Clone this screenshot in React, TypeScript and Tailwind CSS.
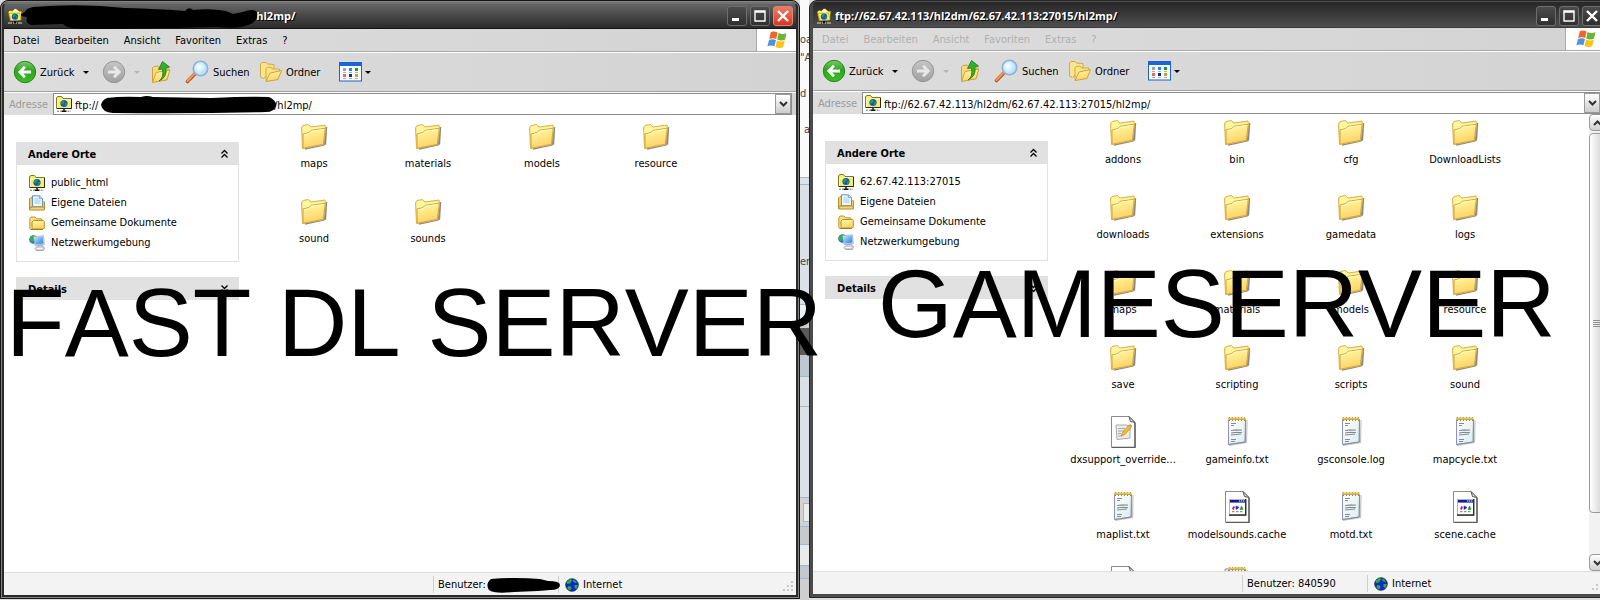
import React from "react";

type IconKind = "folder" | "page" | "note" | "notes" | "cache";

type FileEntry = {
  name: string;
  icon: IconKind;
};

const folders = (names: string[]): FileEntry[] => names.map((name) => ({ name, icon: "folder" }));

const fastDlFiles = folders(["maps", "materials", "models", "resource", "sound", "sounds"]);

const gameServerFiles: FileEntry[] = [
  ...folders(["addons", "bin", "cfg", "DownloadLists"]),
  ...folders(["downloads", "extensions", "gamedata", "logs"]),
  ...folders(["maps", "materials", "models", "resource"]),
  ...folders(["save", "scripting", "scripts", "sound"]),
  { name: "dxsupport_override...", icon: "page" },
  { name: "gameinfo.txt", icon: "note" },
  { name: "gsconsole.log", icon: "note" },
  { name: "mapcycle.txt", icon: "note" },
  { name: "maplist.txt", icon: "note" },
  { name: "modelsounds.cache", icon: "cache" },
  { name: "motd.txt", icon: "note" },
  { name: "scene.cache", icon: "cache" },
  { name: "", icon: "page" },
  { name: "", icon: "notes" },
];

const menuItems = ["Datei", "Bearbeiten", "Ansicht", "Favoriten", "Extras", "?"];

const Gradients = () => (
  <svg width="0" height="0" className="absolute" aria-hidden="true">
    <defs>
      <linearGradient id="folderFront" x1="0" y1="0" x2="0.3" y2="1">
        <stop offset="0" stopColor="#fffda6" />
        <stop offset="1" stopColor="#ffd267" />
      </linearGradient>
      <linearGradient id="greenBall" x1="0" y1="0" x2="0" y2="1">
        <stop offset="0" stopColor="#7ccb6a" />
        <stop offset="0.45" stopColor="#2fa41f" />
        <stop offset="1" stopColor="#3cc022" />
      </linearGradient>
      <linearGradient id="grayBall" x1="0" y1="0" x2="0" y2="1">
        <stop offset="0" stopColor="#c6c6c6" />
        <stop offset="1" stopColor="#a0a0a0" />
      </linearGradient>
      <radialGradient id="lens" cx="0.4" cy="0.4" r="0.6">
        <stop offset="0" stopColor="#ffffff" />
        <stop offset="1" stopColor="#a5dcfa" />
      </radialGradient>
      <linearGradient id="screen" x1="0" y1="0" x2="1" y2="1">
        <stop offset="0" stopColor="#a9e6ff" />
        <stop offset="1" stopColor="#2c7fd8" />
      </linearGradient>
      <linearGradient id="sheet" x1="0" y1="0" x2="1" y2="1">
        <stop offset="0" stopColor="#ffffff" />
        <stop offset="1" stopColor="#dcebee" />
      </linearGradient>
    </defs>
  </svg>
);

const FolderIcon = () => (
  <svg width="32" height="32" viewBox="0 0 32 32">
    <path d="M7 29 L26 25 L28.5 7 L27.5 24 L9 28.5z" fill="#777" stroke="#8a8a8a" strokeWidth="1.4" />
    <path d="M3.5 7.5 L5 5.5 L10.5 4.5 L13 7 L27 5 L27.5 9 L25.5 24.5 L4.5 28.5z" fill="#f6dc78" stroke="#d9b551" />
    <path d="M4.5 8 L5.5 6.2 L10.3 5.3 L12.8 7.8 L26.5 6.2 L26.5 8 L12.5 10.5 L10.5 12.5 L4.5 13.5z" fill="#fff7a0" />
    <path d="M5 14 L11 12.5 L13 10.3 L27.3 8.2 L25.3 24.3 L5.2 28.2z" fill="url(#folderFront)" stroke="#d8aa3a" />
    <path d="M6.2 15 L11.5 13.5 L13.5 11.3 L26 9.5" fill="none" stroke="#fffbd2" />
  </svg>
);

const PageOutline = () => (
  <>
    <path d="M4.5 0.5 H22 L28 6.5 V31.5 H4.5z" fill="#fff" stroke="#8b8b84" />
    <path d="M28 7 V31.5 H5" fill="none" stroke="#5c5c5c" strokeWidth="1.4" />
    <path d="M22 0.5 L28 6.5 L23.5 5.5z" fill="#e0e0e0" stroke="#555" />
  </>
);

const PageIcon = () => (
  <svg width="32" height="32" viewBox="0 0 32 32">
    <PageOutline />
    <path d="M9 9 H20 L23 12 V22 L10 23.5z" fill="#ececec" stroke="#aaa" />
    <path d="M11 12.5h7M11 15h6M11 17.5h3M11 20h4" stroke="#a9a9a9" />
    <path d="M14 20 L15.5 16.5 L21.5 9.5 L24 11.5 L18 18.5z" fill="#f5bd27" stroke="#b88211" strokeWidth="0.6" />
    <path d="M21.5 9.5 L23 8 L25.3 10 L24 11.5z" fill="#cf8f86" />
  </svg>
);

const CacheIcon = () => (
  <svg width="32" height="32" viewBox="0 0 32 32">
    <PageOutline />
    <rect x="8.5" y="8.5" width="16" height="15" fill="#fff" stroke="#b9b7a5" />
    <path d="M8 24.2 H24.8 V8" fill="none" stroke="#111" strokeWidth="1.2" />
    <rect x="9" y="9" width="15" height="2.6" fill="#0c1c9c" />
    <path d="M18 10h1.4M20 10h1.4M22 10h1.4" stroke="#fff" />
    <path d="M12.5 15 L14 16 L12.5 19 L11 18z" fill="#d4141c" />
    <path d="M15 15 V18.5 L18 16.5z" fill="#1620d8" stroke="#1620d8" strokeWidth="0.6" />
    <path d="M20.5 15 L22 18.5 H19z" fill="#129a22" stroke="#129a22" strokeWidth="0.6" />
    <path d="M11 20.7h2.5M15 20.7h2.5M19 20.7h2.5" stroke="#777" />
  </svg>
);

const NoteIcon = ({ stacked }: { stacked?: boolean }) => (
  <svg width="32" height="32" viewBox="0 0 32 32">
    {stacked && <path d="M4 3 L22 2 V10 L4 12z" fill="#dce9ec" stroke="#8f93c9" />}
    <path d="M8 29.5 L25.5 26.5 L26 4" fill="none" stroke="#c4c4c4" strokeWidth="1.2" />
    <path d="M7.5 3.5 H24.5 L24.2 26 L7.5 28.5z" fill="url(#sheet)" stroke="#8f90cc" />
    <path d="M24.5 3.5 L24.2 26 L7.5 28.5" fill="none" stroke="#849599" />
    <path d="M8.5 1 V5 M11.5 1 V5 M14.5 1 V5 M17.5 1 V5 M20.5 1 V5 M23.5 1 V5" stroke="#a88420" strokeWidth="1" />
    <path d="M7 2.5 H24.5" stroke="#e4c44c" strokeWidth="2" />
    <path d="M10 7.5h5M10 9.5h3M10 14.5l5-.6 6 .2M10 17l5-.6 6 .2M10 19l10-1M10 23.5h5M10 25.5h4" stroke="#748084" strokeWidth="0.9" />
  </svg>
);

const EntryIcon = ({ kind }: { kind: IconKind }) => {
  if (kind === "folder") return <FolderIcon />;
  if (kind === "page") return <PageIcon />;
  if (kind === "cache") return <CacheIcon />;
  return <NoteIcon stacked={kind === "notes"} />;
};

const FtpIcon = () => (
  <svg width="16" height="16" viewBox="0 0 16 16" className="shrink-0">
    <path d="M0.5 1.5 L2 0.5 H5.5 L7 2.5 H15.5 V12.5 H0.5z" fill="#f4ee6c" stroke="#7b7620" />
    <path d="M1.5 12 V4 H15" fill="none" stroke="#fffbc0" />
    <path d="M1 12.5 H15.5 V3" fill="none" stroke="#2b2908" />
    <circle cx="8" cy="7.5" r="3.6" fill="#1d4fd0" />
    <path d="M5.5 5.5 L8 4.3 L8.6 6.5 L6.5 8.5 L5 8z M9.5 7 L11.3 7 L10.5 9.8 L8.8 10z" fill="#22a33c" />
    <path d="M8 13 V15 M5.5 15.2 H10.5" stroke="#111" strokeWidth="1.4" />
    <path d="M1 15.2 H5 M11.5 15.2 H15" stroke="#6669a8" strokeDasharray="2 1" />
  </svg>
);

const TitleIcon = () => (
  <svg width="16" height="16" viewBox="0 0 16 16" className="shrink-0">
    <path d="M1 4 L3 2 L6 3 L8 0.5 L10 1 L12 3 L15 3 L14 12 L3 13z" fill="#f7f04a" stroke="#5d5807" strokeWidth="0.8" />
    <path d="M5 3.5 L8 0.8 L11 3 L10 5z" fill="#f5f5f5" />
    <path d="M2 5.5 L4 12.5 L14 12 L12.5 5z" fill="#fdf35d" stroke="#a79b18" strokeWidth="0.6" />
    <circle cx="8" cy="8.6" r="3.2" fill="#1d4fd0" />
    <path d="M5.5 7 L8 5.6 L8.6 8 L6 9.5z M9 8.5 H11 L9.5 11z" fill="#22a33c" />
    <path d="M1 15 H15" stroke="#ddd" strokeDasharray="4 1" />
    <path d="M7 13 H9 V15.5 H7z" fill="#111" />
  </svg>
);

const OwnFilesIcon = () => (
  <svg width="16" height="16" viewBox="0 0 16 16" className="shrink-0">
    <path d="M0.5 14.5 V4 L2 2.5 H4 V14.5z M14.5 6 L15.5 7 V14.5 H12" fill="#f5cc62" stroke="#b98c2c" />
    <path d="M3.5 0.8 H10.5 L13.5 3.5 V12 H3.5z" fill="#edf7ff" stroke="#5f92cc" />
    <path d="M10.3 0.8 V3.6 H13.5" fill="#bcdcf6" stroke="#5f92cc" strokeWidth="0.7" />
    <path d="M5.5 4h4M5.5 6h6M5.5 8h6" stroke="#9cc6ee" />
    <path d="M2.5 13 V11.5 H13.5 V13" fill="none" stroke="#8fa9bf" />
    <path d="M0.8 15 V13 L3 12 H14 L15.3 13 V15z" fill="#f7d67b" stroke="#b98c2c" />
  </svg>
);

const SharedFolderIcon = () => (
  <svg width="16" height="16" viewBox="0 0 16 16" className="shrink-0">
    <path d="M0.8 13.5 V3.5 L2 2 H6 L7.5 3.8 H12.5 L13 5" fill="#f9e17e" stroke="#c09636" />
    <path d="M3 7 L4.5 5.5 H14.5 L15.3 6.5 V13 L14.3 14 H3z" fill="url(#folderFront)" stroke="#b98c2c" />
    <path d="M0.8 13.5 L2 14.5 H14" fill="none" stroke="#a47a24" />
  </svg>
);

const NetworkIcon = () => (
  <svg width="16" height="16" viewBox="0 0 16 16" className="shrink-0">
    <circle cx="4.5" cy="4.5" r="4.3" fill="#2b6fd6" />
    <path d="M1 2.5 L4 0.5 L6 3 L4.5 6.5 L1.5 7z" fill="#35b34a" />
    <path d="M4.5 1.5 L14.5 0.8 L15.3 9.5 L6 10.5z" fill="#d5dcf0" stroke="#8e98bf" strokeWidth="0.6" />
    <path d="M5.6 2.4 L13.7 1.8 L14.4 8.6 L6.6 9.5z" fill="url(#screen)" />
    <path d="M9 10.5 L13 10 L15.5 13 L14.5 15.5 H7.5 L6 13.5z" fill="#c9cde0" stroke="#8f93ad" strokeWidth="0.7" />
    <path d="M7.5 13.5h6" stroke="#fff" />
  </svg>
);

const GlobeIcon = () => (
  <svg width="14" height="14" viewBox="0 0 14 14" className="shrink-0">
    <circle cx="7" cy="7" r="6.3" fill="#1323d6" stroke="#1c2b4e" strokeWidth="0.8" />
    <path d="M1.5 4 L5 1 L7.5 2 L5 5.5 L2 6z M8.5 1.5 L12 4 L10.5 5 L8 3.5z M3 8 L6 8.5 L6.5 11 L4.5 12.5 L2.5 10.5z M9.5 7 L13 7 L11.5 11 L9.5 10z" fill="#24b32e" />
  </svg>
);

const WindowsFlag = () => (
  <svg width="20" height="18" viewBox="0 0 20 18">
    <path d="M3.8 1.2 Q6.5 -0.4 10.6 1.6 L9.2 8 Q5.6 6.4 2.2 8z" fill="#f0672b" />
    <path d="M11.6 2 Q15 4 19.5 2.3 L18 8.8 Q14 10.4 10.2 8.4z" fill="#6cb33a" />
    <path d="M2 9 Q5.4 7.4 9 9 L7.4 15.2 Q4 13.6 0.4 15.2z" fill="#4f92df" />
    <path d="M10 9.4 Q14 11.4 17.8 9.8 L16.2 16.2 Q12.2 18 8.5 15.8z" fill="#f9c21c" />
  </svg>
);

const BallArrow = ({ forward }: { forward?: boolean }) => (
  <svg width="24" height="24" viewBox="0 0 24 24">
    <circle cx="12" cy="12" r="10.7" fill={forward ? "url(#grayBall)" : "url(#greenBall)"} stroke={forward ? "#959595" : "#24861b"} strokeWidth="1" />
    <path
      d={forward ? "M6 12 H17 M12 6.8 L17.2 12 L12 17.2" : "M18 12 H7 M12 6.8 L6.8 12 L12 17.2"}
      fill="none"
      stroke={forward ? "#e8e8e8" : "#fff"}
      strokeWidth="2.8"
    />
  </svg>
);

const UpFolderIcon = () => (
  <svg width="20" height="24" viewBox="0 0 20 24">
    <path d="M1.5 22 V8 L3 6.5 L7 6 L8.5 8 L17 7.5 V10 L18.5 10 L16 19.5z" fill="#f7dc7c" stroke="#cfa13b" />
    <path d="M1.5 22.5 L5 12.5 L18.8 10 L16 19.8z" fill="url(#folderFront)" stroke="#cfa13b" />
    <path d="M8 21 Q13 18 11.5 9 L7.5 9.5 L11.5 1.5 L18.5 7 L15 7.8 Q16.5 17 8 21z" fill="#35b02b" stroke="#1d7a1a" strokeWidth="0.8" />
  </svg>
);

const SearchIcon = () => (
  <svg width="24" height="24" viewBox="0 0 24 24">
    <path d="M2.5 21.5 L10 13.8" stroke="#b4582b" strokeWidth="3.6" strokeLinecap="round" />
    <path d="M2.5 21 L9.5 13.6" stroke="#f39a4d" strokeWidth="2" strokeLinecap="round" />
    <circle cx="15.5" cy="8.5" r="7.2" fill="url(#lens)" stroke="#8fb0dc" strokeWidth="1.6" />
  </svg>
);

const FoldersIcon = () => (
  <svg width="24" height="24" viewBox="0 0 24 24">
    <path d="M1.5 17 V4 L3 2.5 H7 L8.5 4 L15 4.5 V8 L4.5 18.5z" fill="#fbe58a" stroke="#d2a845" />
    <path d="M7 20.5 V8.5 L8.5 7.5 L12 7 L13.5 9 L20.5 9 V11" fill="#fbe58a" stroke="#d2a845" />
    <path d="M7 21.5 L11 13 L22.5 10.5 L19 19.5z" fill="url(#folderFront)" stroke="#cfa13b" />
  </svg>
);

const ViewIcon = () => (
  <svg width="23" height="20" viewBox="0 0 23 20">
    <rect x="0.5" y="0.5" width="22" height="18.5" fill="#f7fafe" stroke="#1b63c8" />
    <rect x="0.5" y="0.5" width="22" height="3.5" fill="#1a66d6" />
    <rect x="4" y="6" width="3" height="3" fill="#9c9cc4" />
    <rect x="10" y="6" width="3" height="3" fill="#2a86e8" />
    <rect x="16" y="6" width="3" height="3" fill="#1d9a2a" />
    <rect x="4" y="12" width="3" height="3" fill="#f06a4a" />
    <rect x="10" y="12" width="3" height="3" fill="#12308e" />
    <rect x="16" y="12" width="3" height="3" fill="#d0a018" />
    <path d="M4 10.5h3M10 10.5h3M16 10.5h3M4 16.5h3M10 16.5h3M16 16.5h3" stroke="#b0b0b0" />
  </svg>
);

const Caret = ({ muted }: { muted?: boolean }) => (
  <svg width="6" height="3" viewBox="0 0 6 3">
    <path d="M0 0 H6 L3 3z" fill={muted ? "#b5b5b5" : "#000"} />
  </svg>
);

const Chevrons = ({ down }: { down?: boolean }) => (
  <svg width="9" height="10" viewBox="0 0 9 10" className={down ? "rotate-180" : ""}>
    <path d="M1.5 4.5 L4.5 1.5 L7.5 4.5 M1.5 8.5 L4.5 5.5 L7.5 8.5" fill="none" stroke="#000" strokeWidth="1.3" />
  </svg>
);

const ArrowGlyph = ({ up }: { up?: boolean }) => (
  <svg width="9" height="6" viewBox="0 0 9 6" className={up ? "rotate-180" : ""}>
    <path d="M1 1 L4.5 4.5 L8 1" fill="none" stroke="#333" strokeWidth="2" />
  </svg>
);

const CaptionButton = ({ label, red, children }: { label: string; red?: boolean; children: React.ReactNode }) => (
  <button
    aria-label={label}
    className={`flex size-5 shrink-0 items-center justify-center rounded-[3px] border ${
      red ? "border-[#e0847a] bg-linear-to-b from-[#ec7a66] to-[#dc3318]" : "border-[#6e6e6e] bg-linear-to-b from-[#4c4c4c] to-[#303030]"
    }`}>
    <svg width="12" height="12" viewBox="0 0 12 12">
      {children}
    </svg>
  </button>
);

const TitleBar = ({ title, active }: { title: string; active: boolean }) => (
  <header
    className={`flex shrink-0 items-center border-b pr-[3px] pl-[3px] ${
      active
        ? "h-[25px] border-[#151515] bg-linear-to-b from-[#666666] from-0% via-[#474747] via-50% to-[#2b2b2b] to-100%"
        : "h-6 border-[#3a3a3a] bg-linear-to-b from-[#2a2a2a] to-[#4e4e4e]"
    }`}>
    <TitleIcon />
    <h1 className="ml-[3px] grow truncate whitespace-pre font-['Open_Sans',sans-serif] text-[11px] font-bold text-white [text-shadow:1px_1px_0_#000]">
      {title}
    </h1>
    <div className="flex gap-[3px]">
      <CaptionButton label="Minimieren">
        <rect x="1" y="8" width="7" height="3" fill="#fff" />
      </CaptionButton>
      <CaptionButton label="Maximieren">
        <path d="M1 1 H11 V11 H1z M0.5 2 H11.5" fill="none" stroke="#fff" strokeWidth="1.4" />
      </CaptionButton>
      <CaptionButton label="Schließen" red={active}>
        <path d="M1 1 L11 11 M11 1 L1 11" stroke="#fff" strokeWidth="2.4" />
      </CaptionButton>
    </div>
  </header>
);

const MenuBar = ({ active }: { active: boolean }) => (
  <nav className="flex h-[23px] shrink-0 border-b border-[#a9a9a9]">
    <div className={`flex grow items-center gap-[15px] border-r border-[#a9a9a9] pt-0.5 pl-[9px] ${active ? "text-black" : "text-[#b0b0b0]"}`}>
      {menuItems.map((item) => (
        <button key={item}>{item}</button>
      ))}
    </div>
    <div className="flex w-[39px] items-center justify-center bg-white">
      <WindowsFlag />
    </div>
  </nav>
);

const Toolbar = () => (
  <div className="flex h-10 shrink-0 items-center border-t border-b border-t-white border-b-[#a0a0a0] pl-[9px]">
    <button className="flex w-[65px] items-center gap-[3px]">
      <BallArrow />
      <span className="pt-0.5">Zurück</span>
    </button>
    <button aria-label="Verlauf" className="flex h-6 w-6 items-center justify-start pl-[5px]">
      <Caret />
    </button>
    <button aria-label="Vorwärts" className="w-8">
      <BallArrow forward />
    </button>
    <button aria-label="Verlauf vorwärts" className="flex h-6 w-[17px] items-center">
      <Caret muted />
    </button>
    <button aria-label="Aufwärts" className="w-[34px]">
      <UpFolderIcon />
    </button>
    <button className="flex w-[74px] items-center gap-1">
      <SearchIcon />
      <span className="pt-0.5">Suchen</span>
    </button>
    <button className="flex w-[80px] items-center gap-[3px]">
      <FoldersIcon />
      <span className="pt-0.5">Ordner</span>
    </button>
    <button aria-label="Ansichten" className="flex items-center gap-[3px]">
      <ViewIcon />
      <Caret />
    </button>
  </div>
);

type AddressBarProps = {
  id: string;
  address: string;
  children?: React.ReactNode;
};

const AddressBar = ({ id, address, children }: AddressBarProps) => (
  <div className="flex h-[23px] shrink-0 border-t border-white pr-1">
    <label htmlFor={id} className="flex w-[49px] items-center pt-0.5 pl-[5px] text-[#9b9b9b]">
      Adresse
    </label>
    <div className="relative flex grow items-center border border-[#8c8c8c] bg-white pl-0.5">
      <FtpIcon />
      <input id={id} defaultValue={address} className="ml-[3px] h-5 min-w-0 grow pt-0.5 outline-none" />
      <button aria-label="Adressen anzeigen" className="flex h-5 w-4 items-center justify-center border border-[#9a9a9a] bg-linear-to-b from-white to-[#cccccc]">
        <ArrowGlyph />
      </button>
      {children}
    </div>
  </div>
);

const SidePanel = ({ server }: { server: string }) => {
  const places = [
    { name: server, icon: <FtpIcon /> },
    { name: "Eigene Dateien", icon: <OwnFilesIcon /> },
    { name: "Gemeinsame Dokumente", icon: <SharedFolderIcon /> },
    { name: "Netzwerkumgebung", icon: <NetworkIcon /> },
  ];

  return (
    <aside className="ml-3 w-[223px] shrink-0 pt-[27px]">
      <section>
        <button className="flex h-[23px] w-full items-center justify-between bg-[#e1e1e1] pr-[10px] pl-3">
          <h2 className="pt-[3px] font-bold">Andere Orte</h2>
          <Chevrons />
        </button>
        <ul className="border border-t-0 border-[#e1e1e1] pt-2 pb-2 pl-3">
          {places.map((place) => (
            <li key={place.name}>
              <a href="#" className="flex h-5 items-center gap-[6px]">
                {place.icon}
                {place.name}
              </a>
            </li>
          ))}
        </ul>
      </section>
      <section className="mt-[15px]">
        <button className="flex h-[23px] w-full items-center justify-between bg-[#e1e1e1] pr-[10px] pl-3">
          <h2 className="pt-[3px] font-bold">Details</h2>
          <Chevrons down />
        </button>
      </section>
    </aside>
  );
};

const FileGrid = ({ files, scrolled }: { files: FileEntry[]; scrolled?: boolean }) => (
  <ul className={`ml-[18px] grid grow auto-rows-[75px] grid-cols-[repeat(4,114px)] overflow-hidden ${scrolled ? "pt-0.5" : "pt-[5px]"}`}>
    {files.map((file, i) => (
      <li key={i} className="flex flex-col items-center gap-[5px]">
        <EntryIcon kind={file.icon} />
        <span className="leading-[14px]">{file.name}</span>
      </li>
    ))}
  </ul>
);

const ScrollBar = () => (
  <div className="flex w-4 shrink-0 flex-col bg-[#f2f2f2]">
    <button aria-label="Nach oben" className="flex h-[17px] items-center justify-center rounded-sm border border-[#9a9a9a] bg-linear-to-b from-white to-[#d0d0d0]">
      <ArrowGlyph up />
    </button>
    <div className="mt-0.5 flex h-[380px] flex-col items-center justify-center gap-px rounded-sm border border-[#9a9a9a] bg-linear-to-r from-white to-[#cfcfcf]">
      {[0, 1, 2, 3].map((line) => (
        <span key={line} className="h-px w-2 bg-[#8f8f8f]" />
      ))}
    </div>
    <div className="grow" />
    <button aria-label="Nach unten" className="flex h-[17px] items-center justify-center rounded-sm border border-[#9a9a9a] bg-linear-to-b from-white to-[#d0d0d0]">
      <ArrowGlyph />
    </button>
  </div>
);

const StatusBar = ({ user }: { user: React.ReactNode }) => (
  <footer className="flex h-[23px] shrink-0 items-center justify-end border-t border-[#dedede] bg-[#f3f3f3] pt-px">
    <div className="flex h-[17px] w-[125px] items-center border-l border-[#d0d0d0] pt-px pl-1">{user}</div>
    <div className="flex h-[17px] w-[238px] items-center gap-1 border-l border-[#d0d0d0] pt-px pl-[6px]">
      <GlobeIcon />
      <span className="grow">Internet</span>
      <svg width="12" height="12" viewBox="0 0 12 12" className="mr-0.5 self-end">
        <path d="M9 0h2v2h-2z M5 4h2v2h-2z M9 4h2v2h-2z M1 8h2v2h-2z M5 8h2v2h-2z M9 8h2v2h-2z" fill="#c9c9c9" />
      </svg>
    </div>
  </footer>
);

type ExplorerProps = {
  id: string;
  title: string;
  address: string;
  server: string;
  files: FileEntry[];
  user: React.ReactNode;
  active?: boolean;
  mask?: React.ReactNode;
  titleMask?: React.ReactNode;
};

const ExplorerWindow = ({ id, title, address, server, files, user, active = false, mask, titleMask }: ExplorerProps) => (
  <main className={`relative w-1/2 shrink-0 rounded-t-lg border bg-[#3a3a3a] ${active ? "mb-px border-[#151515]" : "mb-0.5 border-[#262626]"}`}>
    <div className={`h-full rounded-t-[7px] border ${active ? "border-[#858585]" : "border-[#4e4e4e]"}`}>
      <div className={`flex h-full flex-col overflow-hidden rounded-t-md border-2 ${active ? "border-[#2b2a29] border-t-[#707070]" : "border-[#4a4a4a] border-t-[#2a2a2a]"}`}>
        <TitleBar title={title} active={active} />
        <div className="flex min-h-0 grow flex-col bg-linear-to-r from-[#dddddd] to-[#d3d3d3]">
          <MenuBar active={active} />
          <Toolbar />
          <AddressBar id={id} address={address}>
            {mask}
          </AddressBar>
          <div className="flex min-h-0 grow bg-white">
            <SidePanel server={server} />
            <FileGrid files={files} scrolled={!active} />
            {!active && <ScrollBar />}
          </div>
          <StatusBar user={user} />
        </div>
      </div>
    </div>
    {titleMask}
  </main>
);

// sliver of the page that lies behind both windows
const BackgroundStrip = () => (
  <div className="flex w-[9px] shrink-0 flex-col overflow-hidden bg-[#cfcfcf] text-[#444]">
    <div className="flex h-[177px] flex-col bg-[#fafafa] pt-[31px] leading-[18px]">
      <span>oa</span>
      <span>"A</span>
      <span className="mt-[18px]">d</span>
      <span className="mt-[18px] pl-1">a</span>
    </div>
    <div className="h-2 border-y border-[#a5b8c8] bg-[#dde3e8]" />
    <div className="h-[119px] bg-[#dbe1e6] pt-[70px]">er</div>
    <div className="h-[19px] border-y border-[#a5b8c8] bg-[#eef1f3]" />
    <div className="h-[5px] bg-[#cccccc]" />
    <div className="h-[27px] bg-[#5a5a5a]" />
    <div className="h-[22px] border-b border-[#a5b8c8] bg-[#bfc8d0]" />
    <div className="h-[30px] border-b border-[#a5b8c8] bg-[#dbe1e6]" />
    <div className="h-[91px] border-b border-[#a5b8c8] bg-[#dbe1e6]" />
    <div className="flex h-7 items-center bg-[#d2d2d2] pl-[3px]">
      <div className="h-[19px] grow border border-r-0 border-[#a5b8c8] bg-[#ededed]" />
    </div>
    <div className="h-[19px] border-y border-[#a5b8c8] bg-[#c6cacf]" />
    <div className="h-5 bg-[#ebebeb]" />
    <div className="h-[14px] border-y border-[#a5b8c8] bg-[#c4c9cf]" />
  </div>
);

const App = () => {
  return (
    <div className="relative flex h-screen min-h-[600px] cursor-default overflow-hidden bg-[#dcdcdc] font-['DejaVu_Sans_Condensed','Liberation_Sans',sans-serif] text-[11px] leading-[14px] text-black">
      <Gradients />
      <ExplorerWindow
        active
        id="fastdl-address"
        title={" ".repeat(79) + "/hl2mp/"}
        address={"ftp://" + " ".repeat(55) + "l/hl2mp/"}
        server="public_html"
        files={fastDlFiles}
        user={
          <span className="flex items-center whitespace-nowrap">
            Benutzer:
            <svg width="75" height="15" viewBox="0 0 75 15" className="relative shrink-0">
              <path d="M5 1 Q30 -1 54 1 L62 3 Q74 3 74 7 Q74 12 64 12 L52 13 L28 14 Q8 16 3 12 Q-1 6 5 1z" fill="#000" />
            </svg>
          </span>
        }
        mask={
          <svg width="176" height="18" viewBox="0 0 176 18" className="absolute top-0.5 left-[47px]">
            <path d="M6 2 Q20 0 40 1 Q46 -1 52 1 L110 2 Q150 0 168 1 Q176 5 175 10 Q173 16 165 16 Q90 18 12 17 Q1 16 0 9 Q1 4 6 2z" />
          </svg>
        }
        titleMask={
          <svg width="238" height="26" viewBox="0 0 238 26" className="absolute top-0.5 left-5">
            <path d="M0 11 Q4 10 6 6 L12 4 Q60 0 104 5 Q140 6 164 8 Q168 3 172 7 Q190 5 205 8 L212 11 L222 9 Q232 5 236 9 Q238 20 224 23 Q215 26 195 24 Q110 26 60 26 Q44 25 42 21 L10 22 Q4 20 6 14 L0 13z" />
          </svg>
        }
      />
      <BackgroundStrip />
      <ExplorerWindow
        id="gameserver-address"
        title="ftp://62.67.42.113/hl2dm/62.67.42.113:27015/hl2mp/"
        address="ftp://62.67.42.113/hl2dm/62.67.42.113:27015/hl2mp/"
        server="62.67.42.113:27015"
        files={gameServerFiles}
        user="Benutzer: 840590"
      />
      <p className="pointer-events-none absolute top-[270px] left-[6px] whitespace-nowrap font-['Liberation_Sans',Arial,sans-serif] text-[96px] leading-[106px] [font-kerning:none]">
        FAST DL SERVER
      </p>
      <p className="pointer-events-none absolute top-[251px] left-[878px] whitespace-nowrap font-['Liberation_Sans',Arial,sans-serif] text-[96px] leading-[106px] [font-kerning:none]">
        GAMESERVER
      </p>
    </div>
  );
};

export default App;
